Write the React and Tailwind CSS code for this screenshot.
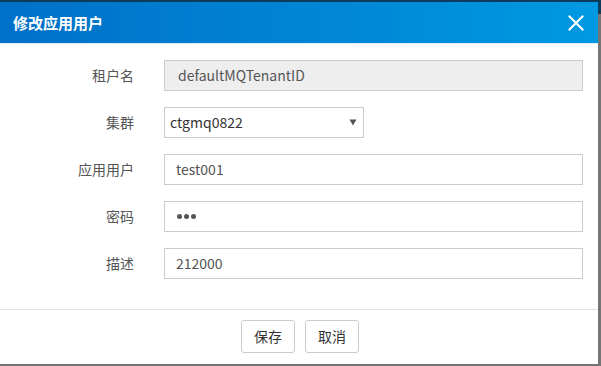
import React from "react";

const font = { fontFamily: '"Noto Sans CJK SC", "Noto Sans", sans-serif' };

function Row({ label, children }) {
  return (
    <div className="flex items-center h-[31px]">
      <div className="w-[134px] text-right text-[14px] text-[#555]">{label}</div>
      <div className="ml-[30px] flex">{children}</div>
    </div>
  );
}

export default function App() {
  return (
    <div className="w-[601px] h-[366px] bg-[#757575] flex flex-col overflow-hidden" style={font}>
      <div className="h-[2px] bg-[#0d3b5c]" />
      <div className="flex h-[362px]">
        <div className="w-[598px] bg-white flex flex-col">
          <div className="h-[42px] bg-gradient-to-r from-[#0070c8] to-[#0099e1] flex items-center justify-between pl-[13px] pr-[12px] border-b border-[#e6eef5]">
            <div className="text-white text-[15px] font-bold leading-none">修改应用用户</div>
            <svg width="16" height="16" viewBox="0 0 16 16" className="mr-[2px]">
              <path d="M1.5 1.5 L14.5 14.5 M14.5 1.5 L1.5 14.5" stroke="white" strokeWidth="2" strokeLinecap="square" />
            </svg>
          </div>
          <div className="flex-1 flex flex-col gap-[16px] pt-[16px] border-b border-[#e2e2e2]">
            <Row label="租户名">
              <div className="w-[419px] h-[31px] bg-[#eeeeee] border border-[#cccccc] flex items-center pl-[13px] text-[14px] text-[#555]">defaultMQTenantID</div>
            </Row>
            <Row label="集群">
              <div className="w-[200px] h-[31px] bg-white border border-[#cccccc] flex items-center justify-between pl-[5px] pr-[6px] text-[14px] text-[#333]">
                <span>ctgmq0822</span>
                <svg width="8" height="7" viewBox="0 0 8 7"><path d="M0.5 0.5 L7.5 0.5 L4 6.5 Z" fill="#555" /></svg>
              </div>
            </Row>
            <Row label="应用用户">
              <div className="w-[419px] h-[31px] bg-white border border-[#cccccc] flex items-center pl-[11px] text-[14px] text-[#555]">test001</div>
            </Row>
            <Row label="密码">
              <div className="w-[419px] h-[31px] bg-white border border-[#cccccc] flex items-center pl-[12px] gap-[2px]">
                <span className="w-[5px] h-[5px] rounded-full bg-[#555]" />
                <span className="w-[5px] h-[5px] rounded-full bg-[#555]" />
                <span className="w-[5px] h-[5px] rounded-full bg-[#555]" />
              </div>
            </Row>
            <Row label="描述">
              <div className="w-[419px] h-[31px] bg-white border border-[#cccccc] flex items-center pl-[11px] text-[14px] text-[#555]">212000</div>
            </Row>
          </div>
          <div className="h-[54px] flex items-center justify-center gap-[10px] pl-[2px] pb-[1px]">
            <div className="w-[54px] h-[33px] border border-[#cccccc] rounded-[3px] flex items-center justify-center text-[14px] text-[#333]">保存</div>
            <div className="w-[54px] h-[33px] border border-[#cccccc] rounded-[3px] flex items-center justify-center text-[14px] text-[#333]">取消</div>
          </div>
        </div>
        <div className="flex-1 flex flex-col">
          <div className="h-[11px] bg-[#0d3b5c]" />
          <div className="h-[1px] bg-[#333]" />
          <div className="flex-1 bg-[#757575]" />
        </div>
      </div>
      <div className="h-[2px] bg-[#757575]" />
    </div>
  );
}
